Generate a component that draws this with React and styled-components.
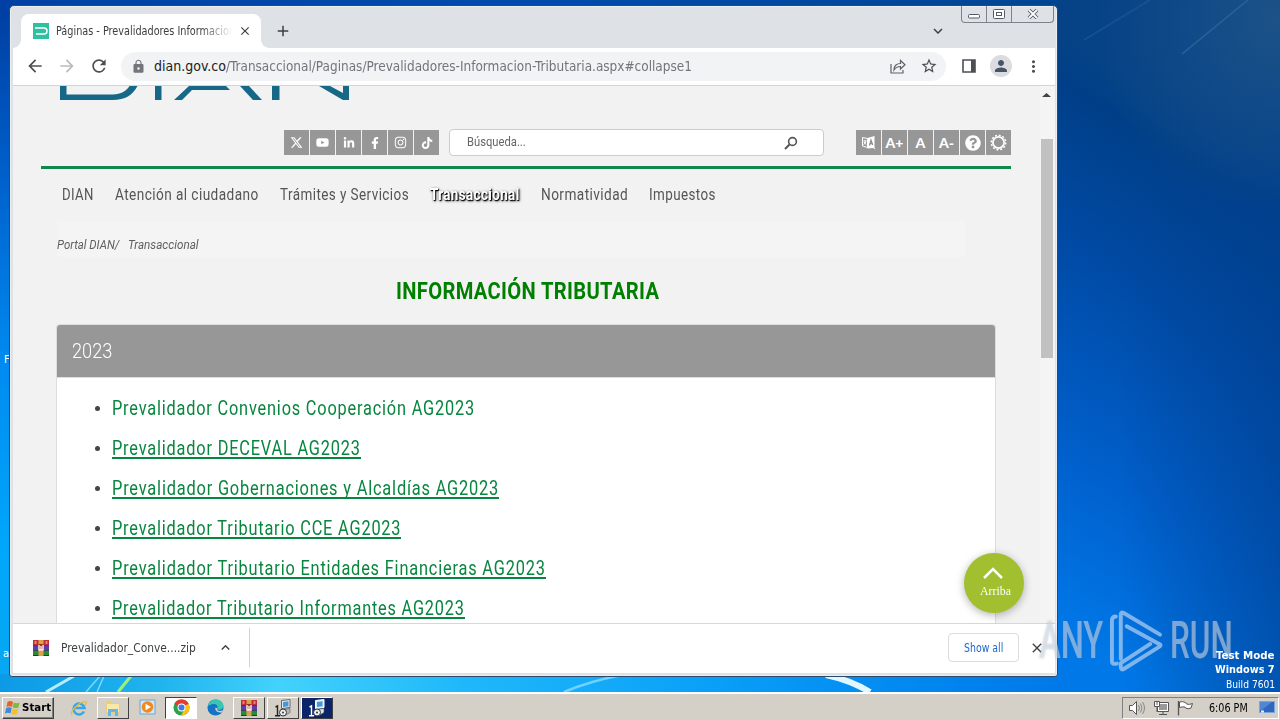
import React, { useLayoutEffect, useRef, useState } from "react";
import styled, { createGlobalStyle } from "styled-components";
import {
  FaYoutube,
  FaLinkedinIn,
  FaFacebookF,
  FaInstagram,
  FaTiktok,
  FaQuestionCircle,
} from "react-icons/fa";
import { FaXTwitter } from "react-icons/fa6";
import {
  MdArrowBack,
  MdArrowForward,
  MdRefresh,
  MdLock,
  MdStarBorder,
  MdPerson,
  MdMoreVert,
  MdAdd,
  MdClose,
  MdKeyboardArrowDown,
  MdKeyboardArrowUp,
} from "react-icons/md";

const tahoma = `"DejaVu Sans Condensed", "DejaVu Sans", sans-serif`;
const roboto = `Roboto, sans-serif`;

const GlobalStyle = createGlobalStyle`
  * {
    box-sizing: border-box;
  }

  body {
    margin: 0;
    overflow: hidden;
    font-family: ${tahoma};
  }

  svg {
    display: block;
    flex: none;
  }
`;

/* ---------- condensed text ---------- */

const FitBox = styled.span`
  display: inline-block;
  flex: none;
  white-space: nowrap;
`;

const FitText = styled.span`
  display: inline-block;
  transform-origin: 0 50%;
`;

// squeezes a line of text to the given width
const Fit = ({ width, children }) => {
  const ref = useRef(null);
  const [scale, setScale] = useState(1);

  useLayoutEffect(() => {
    const measure = () => setScale(width / ref.current.offsetWidth);
    measure();
    document.fonts.ready.then(measure);
  }, [width]);

  return (
    <FitBox style={{ width }}>
      <FitText ref={ref} style={{ transform: `scaleX(${scale})` }}>
        {children}
      </FitText>
    </FitBox>
  );
};

/* ---------- desktop ---------- */

const Desktop = styled.div`
  position: relative;
  width: 1280px;
  height: 720px;
  overflow: hidden;
  display: flex;
  flex-direction: column;
  justify-content: flex-end;
  background: #0060cc;
`;

const Wallpaper = styled.svg`
  position: absolute;
  inset: 0;
`;

const IconLabel = styled.div`
  position: absolute;
  left: ${(p) => p.$x}px;
  top: ${(p) => p.$y}px;
  font-size: 11px;
  line-height: 14px;
  color: #fff;
`;

const BuildInfo = styled.div`
  position: absolute;
  right: 5px;
  top: 649px;
  display: flex;
  flex-direction: column;
  align-items: flex-end;
  font-size: 11px;
  line-height: 16px;
  color: #fff;

  b {
    line-height: 14px;
  }
`;

const Watermark = styled.div`
  position: absolute;
  left: 1039px;
  top: 607px;
  display: flex;
  align-items: center;
  gap: 6px;
  height: 67px;
  font-family: ${roboto};
  font-size: 51px;
  font-weight: 500;
  line-height: 67px;
  color: rgba(225, 232, 242, 0.5);
  text-shadow: 0 0 3px rgba(90, 110, 140, 0.3);
`;

/* ---------- browser window ---------- */

const Window = styled.div`
  position: absolute;
  left: 9px;
  top: 5px;
  width: 1049px;
  height: 672px;
  display: flex;
  flex-direction: column;
  padding: 0 2px 3px 3px;
  border: 1px solid #2c4a68;
  border-radius: 5px 5px 3px 3px;
  background: #dee1e6;
  box-shadow: inset 0 0 0 1px #eceef1;
`;

const TabStrip = styled.div`
  display: flex;
  align-items: flex-start;
  height: 42px;
  flex: none;
`;

const Tab = styled.div`
  position: relative;
  display: flex;
  align-items: center;
  width: 240px;
  height: 34px;
  margin: 8px 0 0 8px;
  padding: 0 9px 0 12px;
  border-radius: 8px 8px 0 0;
  background: #fff;

  &::before,
  &::after {
    content: "";
    position: absolute;
    bottom: 0;
    width: 8px;
    height: 8px;
  }

  &::before {
    left: -8px;
    background: radial-gradient(circle at 0 0, transparent 7.5px, #fff 8px);
  }

  &::after {
    right: -8px;
    background: radial-gradient(circle at 100% 0, transparent 7.5px, #fff 8px);
  }
`;

const TabTitle = styled.div`
  width: 175px;
  margin: 0 7px 0 7px;
  overflow: hidden;
  font-size: 11.5px;
  line-height: 16px;
  color: #3c4043;
  mask-image: linear-gradient(to right, #000 145px, transparent 177px);
`;

const NewTab = styled.div`
  margin: 16px 0 0 13px;
  color: #3c4043;
`;

const TabSearch = styled.div`
  margin: 16px 14px 0 auto;
  color: #3c4043;
`;

const Caption = styled.div`
  display: flex;
  width: 93px;
  height: 17px;
  margin-right: 1px;
  border: 1px solid #7d828c;
  border-top: 0;
  border-radius: 0 0 4px 4px;
`;

const CaptionButton = styled.div`
  display: flex;
  align-items: center;
  justify-content: center;
  width: ${(p) => p.$w}px;
  border-left: ${(p) => (p.$first ? "0" : "1px solid #7d828c")};
`;

const Toolbar = styled.div`
  display: flex;
  align-items: center;
  flex: none;
  height: 38px;
  padding: 0 12px 1px 12px;
  border-bottom: 1px solid #d2d4d7;
  background: #fff;
  color: #5f6368;
`;

const NavButton = styled.div`
  width: 20px;
  margin-right: 12px;
  color: ${(p) => (p.$off ? "#babcbe" : "#4c4f54")};
`;

const AddressBar = styled.div`
  display: flex;
  align-items: center;
  width: 825px;
  height: 29px;
  margin-right: 16px;
  padding: 0 8px 0 10px;
  border-radius: 15px;
  background: #f1f3f4;
  font-size: 14px;
  color: #72767b;

  b {
    font-weight: 400;
    color: #202124;
  }
`;

const LockSlot = styled.div`
  margin-right: 8px;
`;

const AddressIcons = styled.div`
  display: flex;
  align-items: center;
  gap: 14px;
  margin-left: auto;
`;

const Avatar = styled.div`
  display: flex;
  align-items: center;
  justify-content: center;
  width: 22px;
  height: 22px;
  margin: 0 12px 0 14px;
  border-radius: 50%;
  background: #dadce0;
  color: #46546a;
`;

const Viewport = styled.div`
  display: flex;
  flex: 1;
  min-height: 0;
  background: #f2f2f2;
`;

const Scrollbar = styled.div`
  width: 15px;
  padding: 7px 2px 0 0;
  display: flex;
  flex-direction: column;
  align-items: center;
  background: #f4f4f4;
`;

const Thumb = styled.div`
  width: 12px;
  height: 219px;
  margin-top: 42px;
  background: #c1c1c1;
`;

/* ---------- page ---------- */

const Page = styled.div`
  display: flex;
  flex-direction: column;
  width: 1027px;
  overflow: hidden;
  font-family: ${roboto};
`;

const LogoRow = styled.div`
  height: 44px;
  flex: none;
  padding-left: 47px;
`;

const Header = styled.div`
  display: flex;
  align-items: flex-start;
  flex: none;
  height: 39px;
  width: 970px;
  margin-left: 28px;
  padding-left: 243px;
  border-bottom: 3px solid #10884b;
`;

const Squares = styled.div`
  display: flex;
  gap: 1px;
`;

const Square = styled.div`
  display: flex;
  align-items: center;
  justify-content: center;
  width: 25px;
  height: 25px;
  background: #979797;
  color: #fff;
  font-family: Lato, sans-serif;
  font-size: 14px;
  font-weight: 900;
`;

const SearchBox = styled.div`
  display: flex;
  align-items: center;
  justify-content: space-between;
  width: 375px;
  height: 27px;
  margin: -1px 32px 0 10px;
  padding: 0 25px 0 17px;
  border: 1px solid #ccc;
  border-radius: 4px;
  background: #fff;
  font-size: 13.5px;
  color: #666;
`;

const SearchText = styled.div`
  margin-top: -3px;
`;

const Menu = styled.div`
  display: flex;
  flex: none;
  gap: 21px;
  height: 52px;
  padding: 15px 0 0 49px;
  font-size: 16px;
  line-height: 22px;
  letter-spacing: 0.5px;
  color: #555;
`;

const MenuItem = styled.div`
  font-weight: ${(p) => (p.$active ? 700 : 400)};
  color: ${(p) => (p.$active ? "#fff" : "inherit")};
  text-shadow: ${(p) => (p.$active ? "1px 1px 1px #000, 1px 1px 3px #000" : "none")};
`;

const Breadcrumb = styled.div`
  display: flex;
  flex: none;
  gap: 9px;
  width: 908px;
  height: 36px;
  margin-left: 44px;
  padding-top: 15px;
  background: #f4f4f4;
  font-size: 12.5px;
  font-style: italic;
  line-height: 18px;
  color: #606060;
`;

const Heading = styled.div`
  flex: none;
  height: 67px;
  padding: 19px 0 0 383px;
  font-size: 24px;
  font-weight: 700;
  line-height: 30px;
  letter-spacing: 0.4px;
  color: #008000;
`;

const Panel = styled.div`
  flex: 1;
  width: 940px;
  margin-left: 43px;
  border: 1px solid #ddd;
  border-bottom: 0;
  border-radius: 4px 4px 0 0;
  background: #fff;
`;

const PanelHead = styled.div`
  height: 52px;
  padding: 12px 0 0 15px;
  border-radius: 3px 3px 0 0;
  background: #979797;
  font-size: 20px;
  font-weight: 300;
  line-height: 28px;
  color: #fff;
`;

const LinkList = styled.div`
  padding-top: 10px;
  border-top: 1px solid #ddd;
`;

const LinkRow = styled.div`
  display: flex;
  align-items: center;
  height: 40px;
  padding-left: 38px;
  font-size: 20px;
  letter-spacing: 1px;
  color: #08853f;

  &::before {
    content: "";
    width: 5px;
    height: 5px;
    margin: 1px 12px 0 0;
    border-radius: 50%;
    background: #444;
  }
`;

const LinkText = styled.div`
  line-height: 23px;
  height: 22px;
  border-bottom: ${(p) => (p.$plain ? "0" : "2px solid #08853f")};
`;

const TopButton = styled.div`
  position: absolute;
  left: 954px;
  top: 547px;
  display: flex;
  flex-direction: column;
  align-items: center;
  width: 60px;
  height: 60px;
  padding: 14px 2px 0 0;
  border-radius: 50%;
  background: #a1bf2e;
  box-shadow: 0 2px 8px rgba(0, 0, 0, 0.3);
  font-family: "Liberation Serif", serif;
  font-size: 13px;
  line-height: 16px;
  color: #fff;
`;

const TopLabel = styled.div`
  margin: 4px 0 0 5px;
`;

/* ---------- download shelf ---------- */

const Shelf = styled.div`
  display: flex;
  align-items: center;
  flex: none;
  height: 50px;
  padding: 0 10px 2px 20px;
  border-top: 1px solid #d5d7da;
  background: #fff;
  font-size: 12.5px;
  color: #3c4043;
`;

const FileName = styled.div`
  margin: 0 21px 0 12px;
`;

const ShelfDivider = styled.div`
  width: 1px;
  height: 39px;
  margin-left: 15px;
  background: #d0d2d6;
`;

const ShowAll = styled.div`
  display: flex;
  align-items: center;
  justify-content: center;
  width: 71px;
  height: 29px;
  margin: 0 10px 0 auto;
  border: 1px solid #dadce0;
  border-radius: 4px;
  font-size: 11.5px;
  color: #1a66d0;
`;

/* ---------- taskbar ---------- */

const Taskbar = styled.div`
  position: relative;
  display: flex;
  align-items: center;
  height: 28px;
  padding: 1px 0 0 2px;
  border-top: 2px solid #fff;
  background: #d4d0c8;
`;

const StartButton = styled.div`
  display: flex;
  align-items: center;
  gap: 1px;
  width: 52px;
  height: 22px;
  padding-left: 1px;
  border: 1px solid;
  border-color: #fff #404040 #404040 #fff;
  box-shadow: inset -1px -1px #808080;
  font-size: 11px;
  font-weight: 700;
  color: #000;
`;

const TaskButtons = styled.div`
  display: flex;
  gap: 2px;
  margin-left: 9px;
`;

const TaskButton = styled.div`
  display: flex;
  align-items: center;
  justify-content: center;
  width: 32px;
  height: 22px;
  border: 1px solid transparent;
  border-color: ${(p) =>
    p.$kind === "raised"
      ? "#fff #404040 #404040 #fff"
      : p.$kind === "pressed"
        ? "#404040 #fff #fff #404040"
        : p.$kind === "alert"
          ? "#fff #404040 #404040 #fff"
          : "transparent"};
  background: ${(p) =>
    p.$kind === "pressed" ? "#fff" : p.$kind === "alert" ? "#0a246a" : "none"};
`;

const Tray = styled.div`
  display: flex;
  align-items: center;
  width: 157px;
  height: 22px;
  margin: 0 1px 0 auto;
  padding: 0 2px 0 5px;
  border: 1px solid;
  border-color: #808080 #fff #fff #808080;
  font-size: 11.5px;
  color: #000;
`;

const TrayIcons = styled.div`
  display: flex;
  gap: 7px;
  margin-right: 15px;
`;

const Clock = styled.div`
  margin-right: 11px;
`;

/* ---------- drawings ---------- */

const WallpaperArt = () => (
  <Wallpaper width="1280" height="720" viewBox="0 0 1280 720">
    <defs>
      <linearGradient id="left" x1="0" y1="0" x2="0" y2="1">
        <stop offset="0" stopColor="#003da0" />
        <stop offset="0.25" stopColor="#0061cc" />
        <stop offset="0.5" stopColor="#008af0" />
        <stop offset="0.75" stopColor="#00a6fa" />
        <stop offset="1" stopColor="#08a8f0" />
      </linearGradient>
      <linearGradient id="right" x1="1010" y1="600" x2="1270" y2="160" gradientUnits="userSpaceOnUse">
        <stop offset="0" stopColor="#0078e8" />
        <stop offset="0.3" stopColor="#0060cc" />
        <stop offset="0.65" stopColor="#004ba6" />
        <stop offset="0.92" stopColor="#003f88" />
        <stop offset="1" stopColor="#054286" />
      </linearGradient>
      <linearGradient id="shade" x1="0" y1="0" x2="1" y2="0">
        <stop offset="0.3" stopColor="#004090" stopOpacity="0" />
        <stop offset="1" stopColor="#004090" stopOpacity="0.55" />
      </linearGradient>
      <linearGradient id="strip" x1="0" y1="0" x2="1" y2="0">
        <stop offset="0" stopColor="#0c9ae6" />
        <stop offset="0.15" stopColor="#20b4ee" />
        <stop offset="0.26" stopColor="#43d2fc" />
        <stop offset="0.43" stopColor="#20b8fa" />
        <stop offset="0.66" stopColor="#0aa0f8" />
        <stop offset="0.9" stopColor="#0082ee" />
        <stop offset="1" stopColor="#0078e8" />
      </linearGradient>
      <linearGradient id="top" x1="0" y1="0" x2="1" y2="0">
        <stop offset="0" stopColor="#0040a4" />
        <stop offset="0.5" stopColor="#004cae" />
        <stop offset="1" stopColor="#004592" />
      </linearGradient>
      <radialGradient id="corner" cx="1280" cy="20" r="190" gradientUnits="userSpaceOnUse">
        <stop offset="0" stopColor="#1c5286" />
        <stop offset="1" stopColor="#1c5286" stopOpacity="0" />
      </radialGradient>
    </defs>
    <rect width="1280" height="720" fill="url(#right)" />
    <rect x="1050" y="0" width="230" height="720" fill="url(#shade)" />
    <rect x="1050" width="230" height="240" fill="url(#corner)" />
    <rect width="20" height="720" fill="url(#left)" />
    <rect width="1058" height="10" fill="url(#top)" />
    <rect y="674" width="1070" height="20" fill="url(#strip)" />
    <path d="M1182 54 1248 0" stroke="#2a639b" strokeWidth="1.5" />
    <path d="M1084 40 1150 0" stroke="#1e5a98" strokeWidth="2" opacity="0.6" />
    <path d="M46 692 74 676" stroke="#b9ecff" strokeWidth="3" />
    <path d="M86 692 100 676M97 692 104 676" stroke="#7fd8f5" strokeWidth="1.5" />
    <path d="M118 692 131 676" stroke="#9af07a" strokeWidth="3" />
    <path d="M564 692 Q590 681 622 675" fill="none" stroke="#6fd2ff" strokeWidth="2.5" />
    <path d="M826 675 Q850 680 870 692" fill="none" stroke="#e2f6ff" strokeWidth="6" />
  </Wallpaper>
);

const DianLogo = () => (
  <svg width="292" height="14" viewBox="60 86 292 14" fill="#176787">
    <path d="M60 86h6.500v8.500h46c9 0 14-4 17-8.500h8c-5 9-12 14-25 14H60z" />
    <path d="M155 86h6.500v14H155z" />
    <path d="M174 100l15-14h37l4 4h-38l-10 10z" />
    <path d="M240 86h9l13 14h-9z" />
    <path d="M272 86h7.500v14H272z" />
    <path d="M319 86h11l13 7v-7h6v14h-6z" />
  </svg>
);

const Favicon = () => (
  <svg width="16" height="16" viewBox="0 0 16 16">
    <path fill="#2fc0a0" d="M0 0h16v16H0z" />
    <path d="M2 5h9q3 0 3 3t-3 3H3" fill="none" stroke="#fff" strokeWidth="1.500" />
  </svg>
);

const WinRar = ({ size = 16 }) => (
  <svg width={size} height={size} viewBox="0 0 16 16">
    <path fill="#c22c3c" d="M0 0h16v5H0z" />
    <path fill="#5a3fa8" d="M0 5.500h16v5H0z" />
    <path fill="#2b8a3a" d="M0 11h16v5H0z" />
    <path fill="#1f2440" d="M0 5h16v.700H0zM0 10.300h16v.700H0zM0 15.300h16v.700H0z" />
    <path fill="#d9a441" d="M5.500 0h5v16h-5z" />
    <path fill="#a43226" d="M5.500 4h5v7h-5z" />
    <path fill="none" stroke="#fff" strokeWidth="1.300" d="M6 5v5h4V5M8 6v4" />
    <path fill="#e8cf80" d="M1.500 1h2v3h-2zM12.500 1h2v3h-2z" opacity=".6" />
  </svg>
);

const Flag = () => (
  <svg width="17" height="16" viewBox="0 0 16 16">
    <path fill="#e8602c" d="M3 2q3-2 5.500 0L7.500 7Q5 5.500 2 7z" />
    <path fill="#7dbb3c" d="M9.200 2.500q3 1.500 5.800 0L14 7.500q-3 1.200-5.800 0z" />
    <path fill="#3b8bd8" d="M1.700 8q3-1.500 5.500 0L6 13.500q-2.500-1.500-5.500 0z" />
    <path fill="#f5c02c" d="M8 8.500q3 1.500 5.700 0l-1.200 5.500q-3 1.300-5.700 0z" />
  </svg>
);

const InternetExplorer = () => (
  <svg width="18" height="18" viewBox="0 0 18 18" fill="none">
    <path d="M14 12.500A5.500 5.500 0 1 1 14.500 9H5" stroke="#3aa6e2" strokeWidth="2.600" />
    <path d="M2 16C-1 12 12 1 16 3q1 1-1 3" stroke="#e7bd3e" strokeWidth="1.400" />
  </svg>
);

const Folder = () => (
  <svg width="18" height="18" viewBox="0 0 18 18">
    <path fill="#e9cf77" d="M2 2h5l1 2h8v11H2z" />
    <path fill="#f8e9a9" d="M3 5h12v8H3z" />
    <path fill="#69b6e6" d="M4 10h10v7h-3v-4H7v4H4z" />
  </svg>
);

const Player = () => (
  <svg width="17" height="17" viewBox="0 0 17 17">
    <path fill="#d2e6f6" stroke="#6fa3cf" d="M1 1h15v14H1z" />
    <circle cx="8.500" cy="8" r="5.800" fill="#f08a1c" />
    <path fill="#fff" d="M6.500 4.700l5.500 3.300-5.500 3.300z" />
  </svg>
);

const Chrome = () => (
  <svg width="17" height="17" viewBox="0 0 18 18">
    <circle cx="9" cy="9" r="8.500" fill="#2ea24a" />
    <path fill="#e33b2e" d="M9 9 1.500 5A8.500 8.500 0 0 1 16.600 5z" />
    <path fill="#fbc116" d="M9 9h-0l7.500-4A8.500 8.500 0 0 1 8.500 17.500L13 9z" />
    <circle cx="9" cy="9" r="4.200" fill="#fff" />
    <circle cx="9" cy="9" r="3.200" fill="#3b7de8" />
  </svg>
);

const Edge = () => (
  <svg width="17" height="17" viewBox="0 0 18 18">
    <circle cx="9" cy="9" r="8.500" fill="#1672c4" />
    <path fill="#38c6b4" d="M1 7.500C2 3 5.500.500 9.500.500c5 0 8 3.500 8 7 0 2.500-2 4-4.500 4s-2.500-1-2-2C12 7 9 4.500 5.500 5.500 3 6 1.500 7 1 7.500z" />
    <path fill="#d4d0c8" d="M11 10c-1 2 1 3.500 6 2l-1 2c-5 1-8-2-7-5z" />
  </svg>
);

const Installer = ({ light }) => (
  <svg width="18" height="18" viewBox="0 0 18 18">
    <path fill={light ? "#dfe8f2" : "#e8ecf0"} stroke={light ? "#fff" : "#666"} d="M7.500 1.500l8.500-1v8l-8.500 1z" />
    <path fill="#3f9bd8" d="M9 3l5.500-.700v5L9 8z" />
    <path fill={light ? "#dfe3e6" : "#b4b8bc"} stroke="#555" strokeWidth=".6" d="M9 10.500l7-1v4l-5 3z" />
    <path fill="none" stroke={light ? "#fff" : "#222"} strokeWidth="1.400" d="M1.500 8l2-1v9.500M1 16.800h5" />
    <circle cx="9" cy="13.500" r="3.500" fill="#eceff1" stroke="#333" />
    <circle cx="9" cy="13.500" r="1" fill="#333" />
  </svg>
);

const TranslateIcon = () => (
  <svg width="15" height="15" viewBox="0 0 15 15">
    <path fill="none" stroke="#fff" d="M1.500 2.500l5 1v9l-5-1.500z" />
    <path fill="#fff" d="M6.500 3l7-2v11.500l1 2-2.500-1.500-5.500.500z" />
    <path fill="none" stroke="#fff" d="M2.500 6h3M4 5v1M5 6.500q-1 2.500-2.500 3M3 7L5 9.500" />
    <path fill="none" stroke="#8c8c8c" strokeWidth="1.200" d="M8.500 10.500L10 5l1.700 5M9 8.700h2" />
  </svg>
);

const GearIcon = () => (
  <svg width="17" height="17" viewBox="0 0 17 17" fill="none" stroke="#fff">
    <circle cx="8.500" cy="8.500" r="5.600" strokeWidth="1.700" />
    <circle cx="8.500" cy="8.500" r="7.200" strokeWidth="1.500" strokeDasharray="2 1.770" />
  </svg>
);

const SearchIcon = () => (
  <svg width="14" height="14" viewBox="0 0 14 14" fill="none" stroke="#555">
    <circle cx="8.500" cy="5.500" r="3.900" strokeWidth="1.600" />
    <path d="M5.500 8.500L1 13" strokeWidth="2" />
  </svg>
);

const ShareIcon = () => (
  <svg width="16" height="15" viewBox="0 0 16 15" fill="none" stroke="#5f6368" strokeWidth="1.200">
    <path d="M1 5v9h12v-3" />
    <path d="M4 11C4 6.500 7 4.500 10.500 4.500V1.500L15 5.800 10.500 10V7.500C7.500 7.500 5.500 8.500 4 11z" />
  </svg>
);

const SidePanelIcon = () => (
  <svg width="14" height="14" viewBox="0 0 14 14">
    <path d="M1 1h12v12H1z" fill="none" stroke="#4c4f54" strokeWidth="1.600" />
    <path d="M9 1h4v12H9z" fill="#4c4f54" />
  </svg>
);

const AnyRunMark = () => (
  <svg width="55" height="64" viewBox="0 0 56 64" fill="none" stroke="rgba(170,203,240,.75)" strokeWidth="4" strokeLinejoin="round" strokeLinecap="round">
    <path d="M7 7q-4 0-4 4v42q0 3 5 2" />
    <path d="M12 50V5q0-3 3-1.500L52 25.500" />
    <path d="M18 17l33 18q3 1 0 3L15 60.500q-3 1.500-3-2v-4L42 35" />
  </svg>
);

const Speaker = () => (
  <svg width="18" height="16" viewBox="0 0 18 16">
    <path fill="#fff" stroke="#555" d="M1.500 5.500h3l4-4v13l-4-4h-3z" />
    <path fill="none" stroke="#888" d="M10.500 5q2 3 0 6M12.500 3.500q3 4.500 0 9M14.500 2q4 6 0 12" />
  </svg>
);

const Network = () => (
  <svg width="17" height="16" viewBox="0 0 17 16">
    <path fill="#fff" stroke="#555" d="M4.500 2.500h11v9h-11zM6 14.500h8M10 12v2" />
    <path fill="#999" d="M6 4h8v6H6z" />
    <path fill="#fff" stroke="#555" d="M1.500 1.500h5v5h-5zM4 1v4M4 7v5" />
  </svg>
);

const ActionFlag = () => (
  <svg width="17" height="16" viewBox="0 0 17 16">
    <path fill="#fff" stroke="#555" d="M2.500 2q3-1 6 .500l1 1.500q3 1 6-.500l-1.500 4.500q-3 1.500-5.500 0l-.500-1q-3-.500-5.500.500z" />
    <path stroke="#555" strokeWidth="1.300" d="M1.500 1v14.500" />
  </svg>
);

const ShowDesktop = () => (
  <svg width="17" height="13" viewBox="0 0 17 13">
    <path fill="#2f66c0" stroke="#7ba4dd" d="M.500 .500h15v11h-15z" />
    <path fill="#83b6f0" d="M1 1h12L3 9H1z" opacity=".4" />
    <path fill="#e8eef6" d="M2 9.500h3v2H2z" />
  </svg>
);

const menu = [
  { label: "DIAN", width: 32 },
  { label: "Atención al ciudadano", width: 144 },
  { label: "Trámites y Servicios", width: 129 },
  { label: "Transaccional", width: 90, active: true },
  { label: "Normatividad", width: 87 },
  { label: "Impuestos", width: 67 },
];

const links = [
  { label: "Prevalidador Convenios Cooperación AG2023", width: 363, plain: true },
  { label: "Prevalidador DECEVAL AG2023", width: 249 },
  { label: "Prevalidador Gobernaciones y Alcaldías AG2023", width: 387 },
  { label: "Prevalidador Tributario CCE AG2023", width: 289 },
  { label: "Prevalidador Tributario Entidades Financieras AG2023", width: 434 },
  { label: "Prevalidador Tributario Informantes AG2023", width: 353 },
];

const App = () => {
  return (
    <Desktop>
      <GlobalStyle />
      <WallpaperArt />
      <IconLabel $x={4} $y={353}>F</IconLabel>
      <IconLabel $x={3} $y={647}>a</IconLabel>

      <Window>
        <TabStrip>
          <Tab>
            <Favicon />
            <TabTitle>
              <Fit width={179}>Páginas - Prevalidadores Informacion</Fit>
            </TabTitle>
            <MdClose size={14} color="#3c4043" />
          </Tab>
          <NewTab>
            <MdAdd size={18} />
          </NewTab>
          <TabSearch>
            <MdKeyboardArrowDown size={18} />
          </TabSearch>
          <Caption>
            <CaptionButton $w={24} $first>
              <svg width="12" height="12" viewBox="0 0 12 12" fill="#fff" stroke="#555a66">
                <rect x=".5" y="6.500" width="11" height="3.500" rx="1" />
              </svg>
            </CaptionButton>
            <CaptionButton $w={26}>
              <svg width="12" height="10" viewBox="0 0 12 10" fill="#fff" stroke="#555a66">
                <rect x=".5" y=".5" width="11" height="9" rx="1" />
                <rect x="3.500" y="3.500" width="5" height="3" />
              </svg>
            </CaptionButton>
            <CaptionButton $w={42}>
              <svg width="12" height="10" viewBox="0 0 12 10" fill="none">
                <path d="M2 1l8 8M10 1L2 9" stroke="#555a66" strokeWidth="3.600" />
                <path d="M2 1l8 8M10 1L2 9" stroke="#fff" strokeWidth="1.800" />
              </svg>
            </CaptionButton>
          </Caption>
        </TabStrip>

        <Toolbar>
          <NavButton><MdArrowBack size={20} /></NavButton>
          <NavButton $off><MdArrowForward size={20} /></NavButton>
          <NavButton><MdRefresh size={20} /></NavButton>
          <AddressBar>
            <LockSlot><MdLock size={15} /></LockSlot>
            <b><Fit width={72}>dian.gov.co</Fit></b>
            <Fit width={466}>
              /Transaccional/Paginas/Prevalidadores-Informacion-Tributaria.aspx#collapse1
            </Fit>
            <AddressIcons>
              <ShareIcon />
              <MdStarBorder size={18} color="#4c4f54" />
            </AddressIcons>
          </AddressBar>
          <SidePanelIcon />
          <Avatar><MdPerson size={18} /></Avatar>
          <MdMoreVert size={19} color="#4c4f54" />
        </Toolbar>

        <Viewport>
          <Page>
            <LogoRow><DianLogo /></LogoRow>
            <Header>
              <Squares>
                <Square><FaXTwitter size={13} /></Square>
                <Square><FaYoutube size={13} /></Square>
                <Square><FaLinkedinIn size={12} /></Square>
                <Square><FaFacebookF size={12} /></Square>
                <Square><FaInstagram size={13} /></Square>
                <Square><FaTiktok size={12} /></Square>
              </Squares>
              <SearchBox>
                <SearchText><Fit width={59}>Búsqueda...</Fit></SearchText>
                <SearchIcon />
              </SearchBox>
              <Squares>
                <Square><TranslateIcon /></Square>
                <Square>A+</Square>
                <Square>A</Square>
                <Square>A-</Square>
                <Square><FaQuestionCircle size={16} /></Square>
                <Square><GearIcon /></Square>
              </Squares>
            </Header>
            <Menu>
              {menu.map((m) => (
                <MenuItem key={m.label} $active={m.active}>
                  <Fit width={m.width}>{m.label}</Fit>
                </MenuItem>
              ))}
            </Menu>
            <Breadcrumb>
              <Fit width={62}>Portal DIAN/</Fit>
              <Fit width={71}>Transaccional</Fit>
            </Breadcrumb>
            <Heading><Fit width={263}>INFORMACIÓN TRIBUTARIA</Fit></Heading>
            <Panel>
              <PanelHead><Fit width={40}>2023</Fit></PanelHead>
              <LinkList>
                {links.map((l) => (
                  <LinkRow key={l.label}>
                    <LinkText $plain={l.plain}>
                      <Fit width={l.width}>{l.label}</Fit>
                    </LinkText>
                  </LinkRow>
                ))}
              </LinkList>
            </Panel>
          </Page>
          <Scrollbar>
            <svg width="9" height="4" viewBox="0 0 9 4">
              <path d="M0 4l4.500-4L9 4z" fill="#444" />
            </svg>
            <Thumb />
          </Scrollbar>
        </Viewport>

        <Shelf>
          <WinRar />
          <FileName><Fit width={135}>Prevalidador_Conve....zip</Fit></FileName>
          <MdKeyboardArrowUp size={17} />
          <ShelfDivider />
          <ShowAll><Fit width={39}>Show all</Fit></ShowAll>
          <MdClose size={16} />
        </Shelf>

        <TopButton>
          <svg width="20" height="12" viewBox="0 0 20 12">
            <path d="M1 11l9-9 9 9" fill="none" stroke="#fff" strokeWidth="2.600" />
          </svg>
          <TopLabel><Fit width={31}>Arriba</Fit></TopLabel>
        </TopButton>
      </Window>

      <Watermark>
        <Fit width={64}>ANY</Fit>
        <AnyRunMark />
        <Fit width={63}>RUN</Fit>
      </Watermark>
      <BuildInfo>
        <b><Fit width={59}>Test Mode</Fit></b>
        <b><Fit width={60}>Windows 7</Fit></b>
        <Fit width={49}>Build 7601</Fit>
      </BuildInfo>

      <Taskbar>
        <StartButton>
          <Flag />
          <Fit width={29}>Start</Fit>
        </StartButton>
        <TaskButtons>
          <TaskButton><InternetExplorer /></TaskButton>
          <TaskButton $kind="raised"><Folder /></TaskButton>
          <TaskButton><Player /></TaskButton>
          <TaskButton $kind="pressed"><Chrome /></TaskButton>
          <TaskButton><Edge /></TaskButton>
          <TaskButton $kind="raised"><WinRar /></TaskButton>
          <TaskButton $kind="raised"><Installer /></TaskButton>
          <TaskButton $kind="alert"><Installer light /></TaskButton>
        </TaskButtons>
        <Tray>
          <TrayIcons>
            <Speaker />
            <Network />
            <ActionFlag />
          </TrayIcons>
          <Clock><Fit width={39}>6:06 PM</Fit></Clock>
          <ShowDesktop />
        </Tray>
      </Taskbar>
    </Desktop>
  );
};

export default App;
